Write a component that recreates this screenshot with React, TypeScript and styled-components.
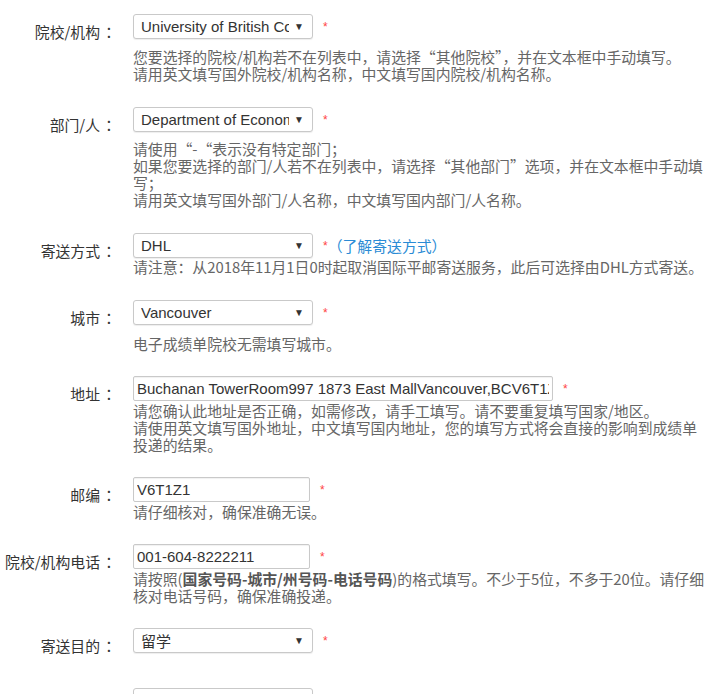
import styled, { createGlobalStyle } from 'styled-components';

const GlobalStyle = createGlobalStyle`
  html, body {
    margin: 0;
    padding: 0;
    background: #fff;
  }
  body {
    font-family: "Noto Sans CJK SC", "Liberation Sans", sans-serif;
  }
`;

const Form = styled.div`
  width: 708px;
  padding-top: 14px;
`;

const Row = styled.div<{ $after?: number }>`
  display: flex;
  align-items: flex-start;
  margin-bottom: ${(p) => p.$after ?? 25}px;
`;

const Label = styled.div`
  width: 118px;
  flex-shrink: 0;
  margin-right: 15px;
  padding-top: 5px;
  line-height: 25px;
  text-align: right;
  font-size: 14.85px;
  color: #333;
  white-space: nowrap;
`;

// TC 字形的全角冒号居中，接近原图效果
const Colon = styled.span`
  display: inline-block;
  width: 18px;
  text-align: center;
  font-family: "Noto Sans CJK TC", sans-serif;
`;

const Field = styled.div`
  width: 572px;
  display: flex;
  flex-direction: column;
`;

const Control = styled.div`
  display: flex;
  align-items: flex-start;
  height: 25px;
`;

const Select = styled.div`
  box-sizing: border-box;
  width: 180px;
  height: 25px;
  display: flex;
  align-items: center;
  padding: 0 8px 0 7px;
  border: 1px solid #c9c9c9;
  border-radius: 3px;
  box-shadow: 0 1px 1px rgba(0, 0, 0, 0.07);
  background: #fff;
  font-family: "Liberation Sans", "Noto Sans CJK SC", sans-serif;
  font-size: 15px;
  color: #333;
`;

const SelectText = styled.span`
  flex: 1;
  overflow: hidden;
  white-space: nowrap;
`;

const Arrow = styled.span`
  margin-left: 5px;
  font-size: 10px;
  color: #333;
`;

const TextInput = styled.input<{ $width: number }>`
  box-sizing: border-box;
  width: ${(p) => p.$width}px;
  height: 25px;
  margin: 0;
  padding: 0 3px;
  border: 1px solid #c9c9c9;
  border-radius: 2px;
  box-shadow: inset 0 1px 1px rgba(0, 0, 0, 0.06);
  outline: none;
  background: #fff;
  font-family: "Liberation Sans", sans-serif;
  font-size: 15px;
  color: #333;
`;

const Star = styled.span`
  margin-left: 10px;
  padding-top: 7px;
  line-height: 1;
  font-family: "Liberation Sans", sans-serif;
  font-size: 12px;
  color: #f44;
`;

const Link = styled.a`
  line-height: 25px;
  font-size: 14.85px;
  color: #2a8bd5;
  text-decoration: none;
  cursor: pointer;
`;

const Help = styled.div<{ $top?: number }>`
  margin-top: ${(p) => p.$top ?? 0}px;
  font-size: 14.85px;
  line-height: 17px;
  color: #666;

  & b {
    color: #555;
  }
`;

const Dropdown = ({ value }: { value: string }) => (
  <Select>
    <SelectText>{value}</SelectText>
    <Arrow>▼</Arrow>
  </Select>
);

const FieldLabel = ({ text }: { text: string }) => (
  <Label>
    {text}
    <Colon>：</Colon>
  </Label>
);

export default function App() {
  return (
    <>
      <GlobalStyle />
      <Form>
        <Row>
          <FieldLabel text="院校/机构" />
          <Field>
            <Control>
              <Dropdown value="University of British Columbia" />
              <Star>*</Star>
            </Control>
            <Help $top={9}>
              您要选择的院校/机构若不在列表中，请选择“其他院校”，并在文本框中手动填写。
              <br />
              请用英文填写国外院校/机构名称，中文填写国内院校/机构名称。
            </Help>
          </Field>
        </Row>

        <Row>
          <FieldLabel text="部门/人" />
          <Field>
            <Control>
              <Dropdown value="Department of Economics" />
              <Star>*</Star>
            </Control>
            <Help $top={8}>
              请使用“-“表示没有特定部门；
              <br />
              如果您要选择的部门/人若不在列表中，请选择“其他部门”选项，并在文本框中手动填写；
              <br />
              请用英文填写国外部门/人名称，中文填写国内部门/人名称。
            </Help>
          </Field>
        </Row>

        <Row>
          <FieldLabel text="寄送方式" />
          <Field>
            <Control>
              <Dropdown value="DHL" />
              <Star>*</Star>
              <Link>（了解寄送方式）</Link>
            </Control>
            <Help>
              请注意：从2018年11月1日0时起取消国际平邮寄送服务，此后可选择由DHL方式寄送。
            </Help>
          </Field>
        </Row>

        <Row $after={24}>
          <FieldLabel text="城市" />
          <Field>
            <Control>
              <Dropdown value="Vancouver" />
              <Star>*</Star>
            </Control>
            <Help $top={10}>电子成绩单院校无需填写城市。</Help>
          </Field>
        </Row>

        <Row $after={24}>
          <FieldLabel text="地址" />
          <Field>
            <Control>
              <TextInput
                $width={420}
                readOnly
                defaultValue="Buchanan TowerRoom997 1873 East MallVancouver,BCV6T1Z1"
              />
              <Star>*</Star>
            </Control>
            <Help $top={1}>
              请您确认此地址是否正确，如需修改，请手工填写。请不要重复填写国家/地区。
              <br />
              请使用英文填写国外地址，中文填写国内地址，您的填写方式将会直接的影响到成绩单投递的结果。
            </Help>
          </Field>
        </Row>

        <Row $after={24}>
          <FieldLabel text="邮编" />
          <Field>
            <Control>
              <TextInput $width={177} readOnly defaultValue="V6T1Z1" />
              <Star>*</Star>
            </Control>
            <Help $top={1}>请仔细核对，确保准确无误。</Help>
          </Field>
        </Row>

        <Row $after={24}>
          <FieldLabel text="院校/机构电话" />
          <Field>
            <Control>
              <TextInput $width={177} readOnly defaultValue="001-604-8222211" />
              <Star>*</Star>
            </Control>
            <Help $top={1}>
              请按照(<b>国家号码-城市/州号码-电话号码</b>)的格式填写。不少于5位，不多于20位。请仔细核对电话号码，确保准确投递。
            </Help>
          </Field>
        </Row>

        <Row $after={30}>
          <FieldLabel text="寄送目的" />
          <Field>
            <Control>
              <Dropdown value="留学" />
              <Star>*</Star>
            </Control>
          </Field>
        </Row>

        <Row>
          <FieldLabel text="学历层次" />
          <Field>
            <Control>
              <Dropdown value="本科生" />
              <Star>*</Star>
            </Control>
          </Field>
        </Row>
      </Form>
    </>
  );
}
